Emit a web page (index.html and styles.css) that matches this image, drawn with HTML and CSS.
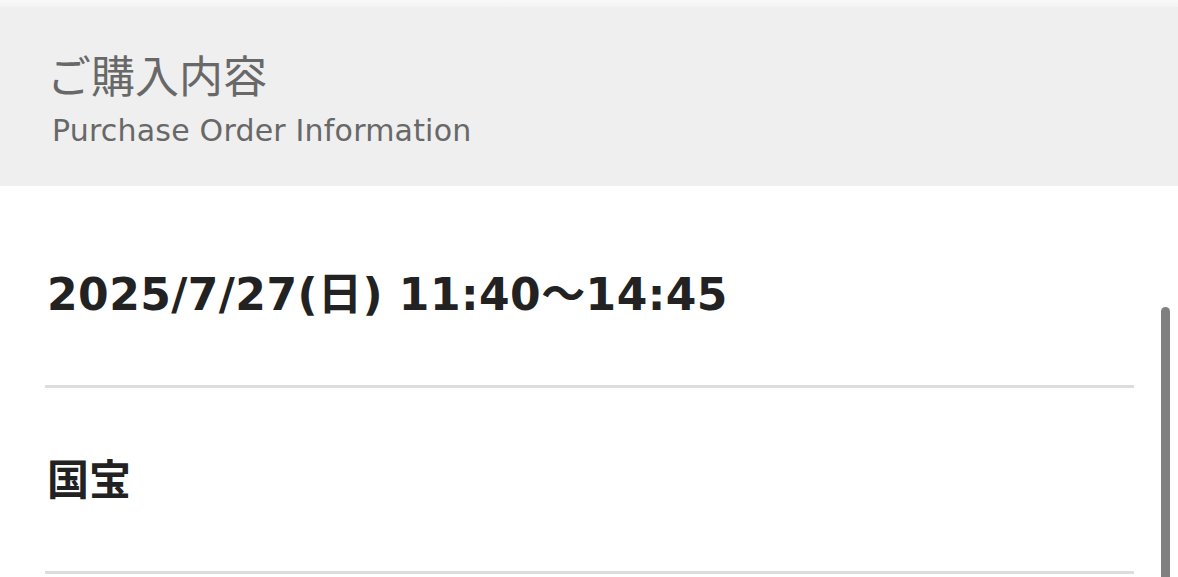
FILE: index.html
```html
<!DOCTYPE html>
<html lang="ja">
<head>
  <meta charset="UTF-8" />
  <meta name="viewport" content="width=device-width, initial-scale=1.0" />
  <title>ご購入内容</title>
  <link rel="stylesheet" href="styles.css">
</head>
<body>
  <div class="franja-superior"></div>

  <div class="cabecera">
    <h1>ご購入内容</h1>
    <p class="subtitulo">Purchase Order Information</p>
  </div>

  <div class="contenido">
    <div class="fila fila-fecha">
      <h2>2025/7/27(日) 11:40〜14:45</h2>
    </div>
    <div class="fila fila-titulo">
      <h2>国宝</h2>
    </div>
  </div>

  <div class="barra-desplazamiento"></div>
</body>
</html>
```

FILE: styles.css
```css
body {
  margin: 0;
  background-color: #ffffff;
  font-family: "Noto Sans CJK JP", "DejaVu Sans", sans-serif;
  overflow: hidden;
}

.franja-superior {
  height: 7px;
  background: linear-gradient(#f9f9f9, #f3f3f3);
}

.cabecera {
  background-color: #efefef;
  height: 179px;
  box-sizing: border-box;
  padding: 41px 0 0 47px;
}

.cabecera h1 {
  margin: 0;
  font-size: 44px;
  font-weight: normal;
  line-height: 52px;
  color: #686868;
}

.subtitulo {
  margin: 13px 0 0 5px;
  font-family: "DejaVu Sans", sans-serif;
  font-size: 30px;
  line-height: 36px;
  letter-spacing: 0.2px;
  color: #686868;
}

.contenido {
  padding: 0 44px 0 45px;
}

.fila {
  border-bottom: 3px solid #dddddd;
  padding-left: 2px;
}

.fila h2 {
  margin: 0;
  font-weight: bold;
  line-height: 60px;
  color: #222222;
}

.fila-fecha {
  padding-top: 79px;
  padding-bottom: 60px;
}

.fila-fecha h2 {
  font-family: "DejaVu Sans", "Noto Sans CJK JP", sans-serif;
  font-size: 44px;
  letter-spacing: 0.45px;
}

.fila-titulo {
  padding-top: 59px;
  padding-bottom: 64px;
}

.fila-titulo h2 {
  font-family: "Noto Sans CJK JP", sans-serif;
  font-size: 42px;
}

.barra-desplazamiento {
  position: absolute;
  left: 1161px;
  top: 307px;
  width: 9px;
  height: 280px;
  background-color: #808080;
  border-radius: 5px;
}
```
